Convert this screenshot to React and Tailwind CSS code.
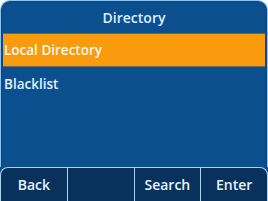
export default function App() {
    const keys = ['Back', '', 'Search', 'Enter'];
    return (
        <div
            className="flex h-[201px] w-[268px] flex-col bg-white"
            style={{ fontFamily: '"Open Sans", "Noto Sans", sans-serif' }}
        >
            <div className="flex flex-1 flex-col rounded-t-[10px] border border-b-0 border-[#8fc3ea] bg-[#0a4a88] p-[2px] pb-0">
                <div className="flex flex-1 flex-col rounded-t-[8px] bg-[#0b4f8f]">
                    <div className="flex h-[30px] items-center justify-center pb-[2px] text-[14px] font-semibold text-[#dcefff]">
                        Directory
                    </div>
                    <div className="flex h-[34px] items-center border-y border-[#6f6a55] bg-[#f99b0c] px-[1px] text-[13.5px] font-semibold text-[#fff6e6]">
                        Local Directory
                    </div>
                    <div className="flex h-[34px] items-center px-[1px] text-[13.5px] font-semibold text-[#e2f1ff]">
                        Blacklist
                    </div>
                </div>
            </div>
            <div className="flex h-[34px] bg-[#0b4f8f]">
                {keys.map((k, i) => (
                    <div
                        key={i}
                        className={
                            'flex flex-1 items-center justify-center border-t border-l border-[#a6d3f2] bg-[#08315c] text-[14px] font-semibold text-[#e6f3ff] ' +
                            (i === 0 ? 'rounded-tl-[8px] ' : '') +
                            (i === 3 ? 'rounded-tr-[8px] border-r' : '')
                        }
                    >
                        {k}
                    </div>
                ))}
            </div>
        </div>
    );
}
